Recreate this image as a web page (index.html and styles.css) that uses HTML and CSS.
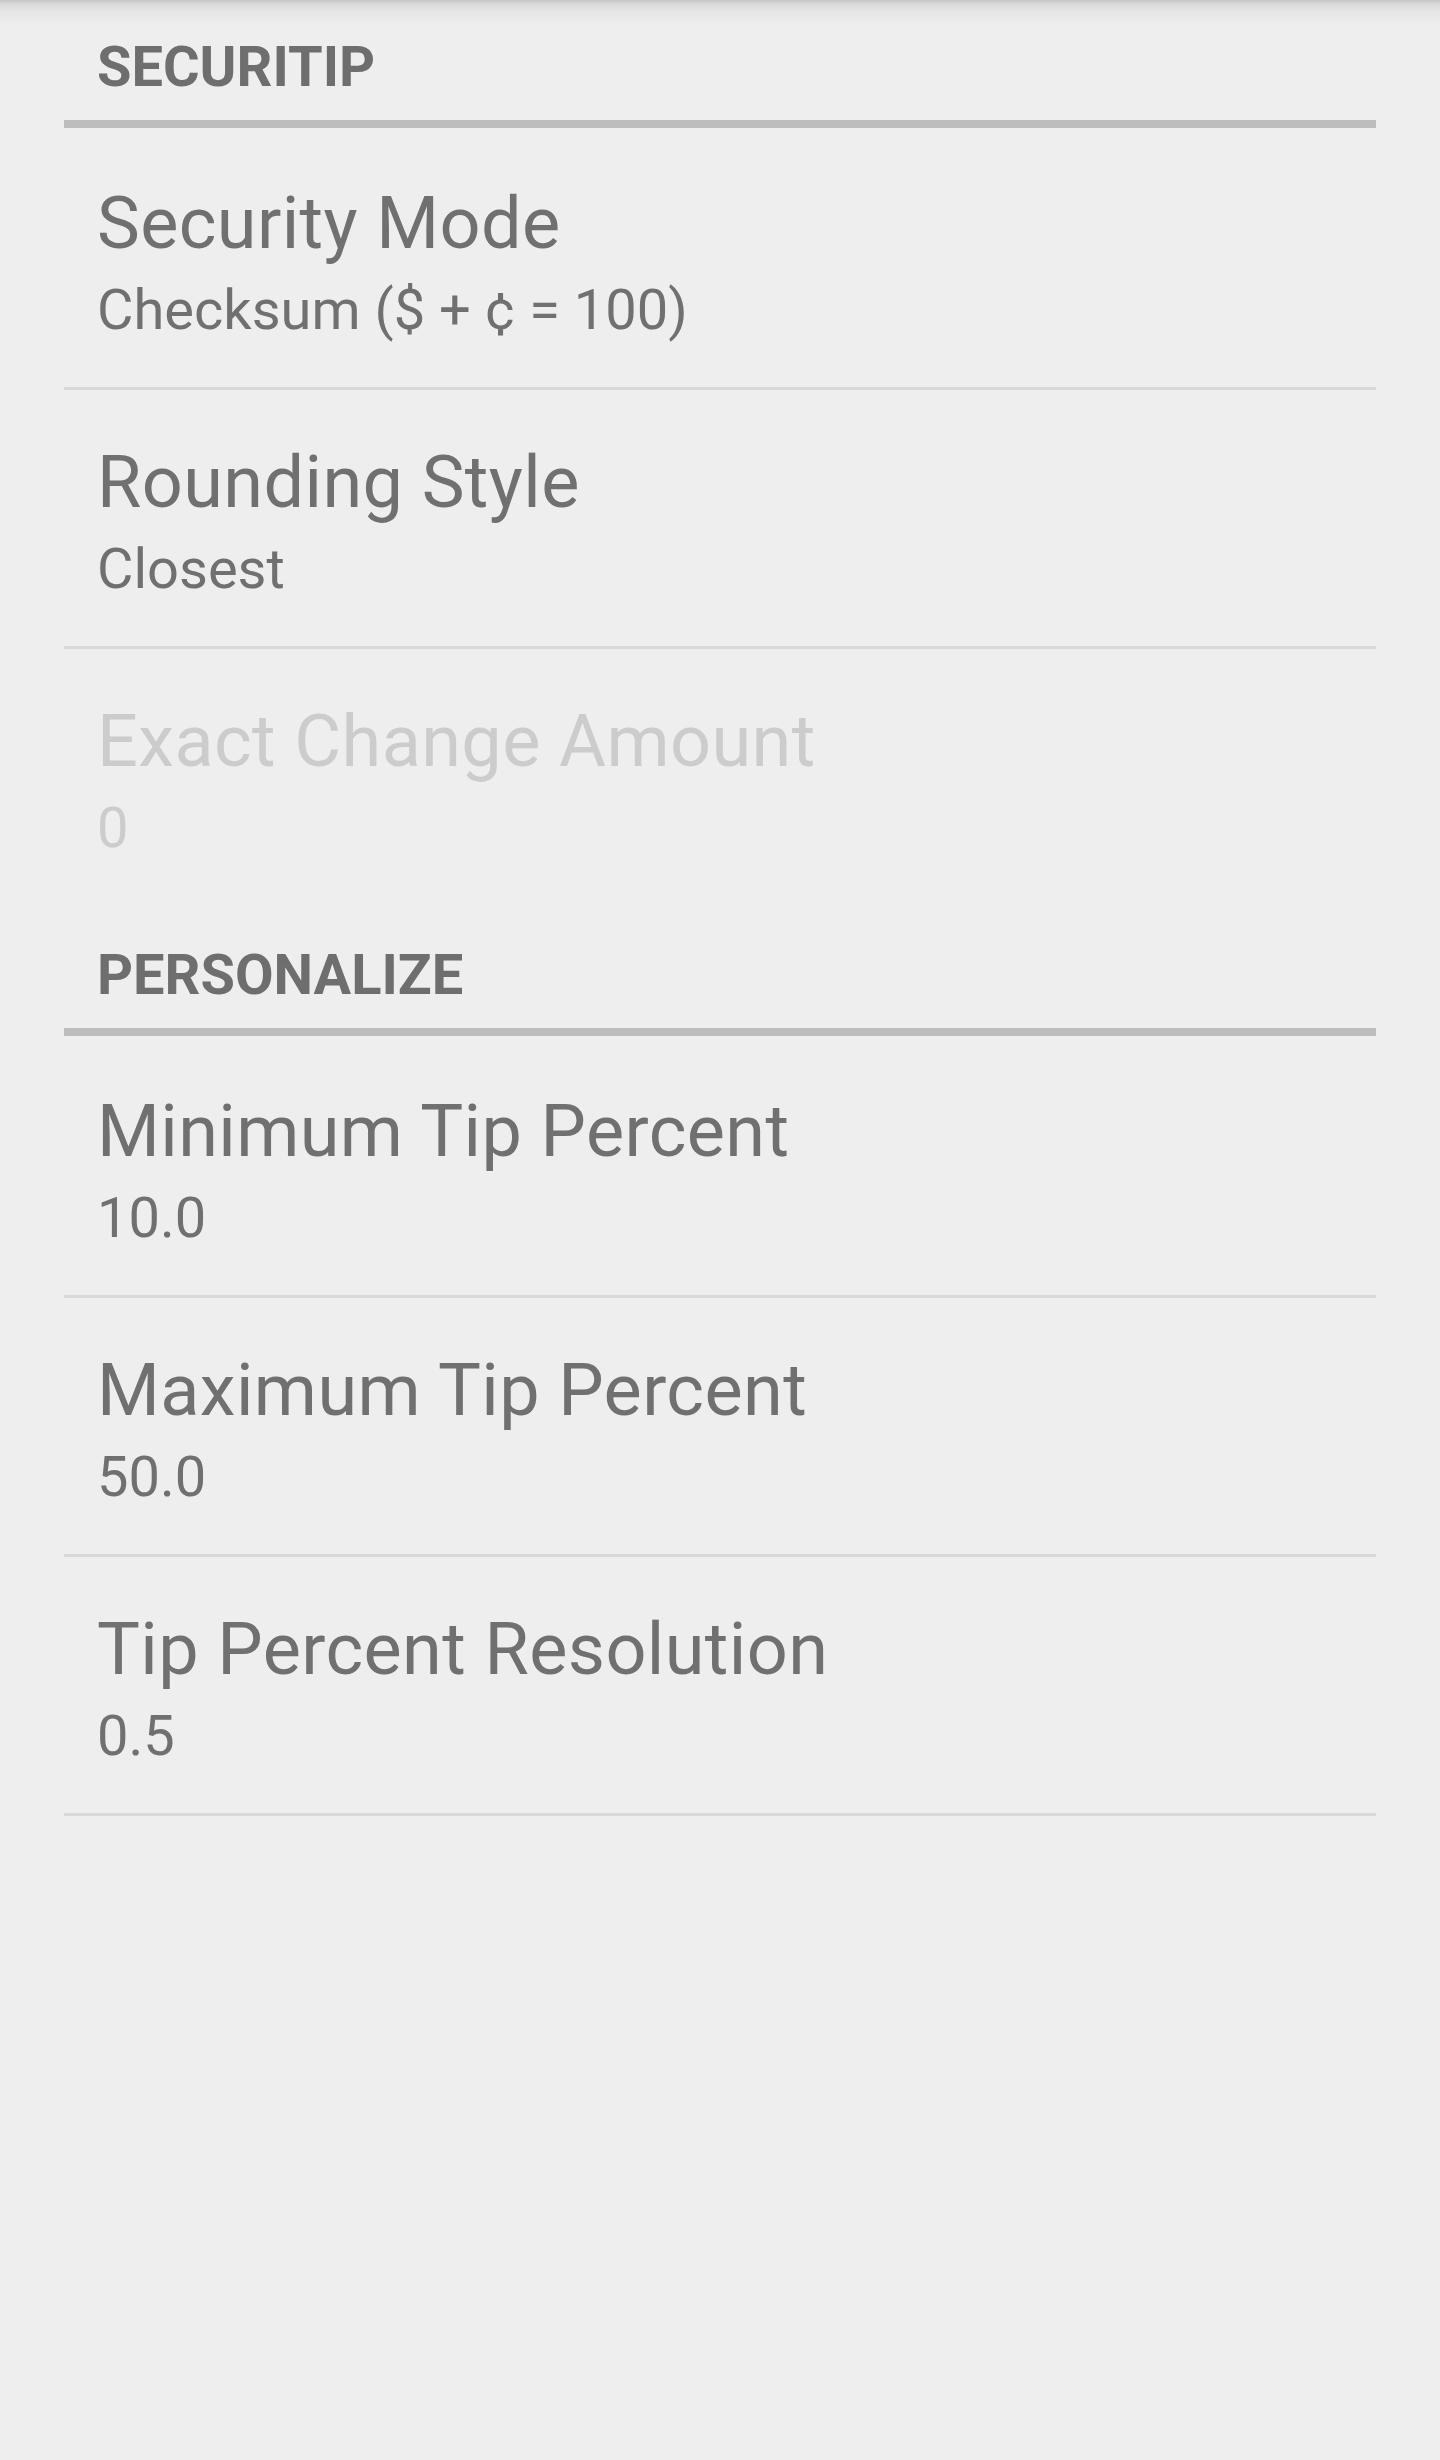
FILE: index.html
```html
<!DOCTYPE html>
<html lang="en">
<head>
<meta charset="utf-8">
<title>Settings</title>
<link rel="stylesheet" href="styles.css">
</head>
<body>
<div class="shadow"></div>
<main class="prefs">
  <section class="group">
    <h2 class="group-title">SECURITIP</h2>
    <div class="item">
      <div class="title">Security Mode</div>
      <div class="summary">Checksum ($ + ¢ = 100)</div>
    </div>
    <div class="item">
      <div class="title">Rounding Style</div>
      <div class="summary">Closest</div>
    </div>
    <div class="item disabled last">
      <div class="title">Exact Change Amount</div>
      <div class="summary">0</div>
    </div>
  </section>
  <section class="group">
    <h2 class="group-title">PERSONALIZE</h2>
    <div class="item">
      <div class="title">Minimum Tip Percent</div>
      <div class="summary">10.0</div>
    </div>
    <div class="item">
      <div class="title">Maximum Tip Percent</div>
      <div class="summary">50.0</div>
    </div>
    <div class="item">
      <div class="title">Tip Percent Resolution</div>
      <div class="summary">0.5</div>
    </div>
  </section>
</main>
</body>
</html>
```
FILE: styles.css
```css
html, body {
  margin: 0;
  padding: 0;
}
body {
  background: #eeeeee;
  font-family: Roboto, "Noto Sans", sans-serif;
  color: #707070;
  min-height: 2460px;
}
.shadow {
  position: absolute;
  top: 0;
  left: 0;
  right: 0;
  height: 24px;
  background: linear-gradient(#c6c6c6 0, #d9d9d9 4px, #e6e6e6 12px, #eeeeee 24px);
  pointer-events: none;
}
.prefs {
  margin: 0 64px;
  position: relative;
}
.group-title {
  margin: 0 0 3px 0;
  padding: 34px 0 20px 33px;
  font-size: 56px;
  line-height: 66px;
  font-weight: 700;
  color: #6e6e6e;
  border-bottom: 8px solid #bdbdbd;
}
.item {
  box-sizing: border-box;
  height: 259px;
  padding: 51px 0 0 33px;
  border-bottom: 3px solid #d8d8d8;
}
.item.last {
  border-bottom-color: transparent;
}
.title {
  font-size: 72px;
  line-height: 84px;
  letter-spacing: 0.4px;
}
.summary {
  margin-top: 11px;
  font-size: 56px;
  line-height: 66px;
}
.disabled {
  color: #cccccc;
}
```
